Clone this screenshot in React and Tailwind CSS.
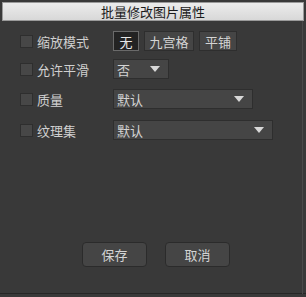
import React from "react";

const font = { fontFamily: '"Noto Sans CJK SC", "Noto Sans", sans-serif' };

function Check() {
  return <div className="w-[13px] h-[13px] bg-[#474747] border border-[#2e2e2e] shrink-0" />;
}

function Tri() {
  return (
    <svg width="10" height="6" viewBox="0 0 10 6">
      <path d="M0 0 L10 0 L5 6 Z" fill="#d8d8d8" />
    </svg>
  );
}

function Select({ w, text }) {
  return (
    <div className={`${w} h-[20px] bg-[#454545] border border-[#2e2e2e] flex items-center justify-between pl-[3px] pr-[8px] text-[#d4d4d4]`}>
      <span>{text}</span>
      <Tri />
    </div>
  );
}

function Row({ label, children, mt }) {
  return (
    <div className={`flex items-center h-[20px] ${mt}`}>
      <div className="w-[113px] pl-[20px] flex items-center gap-[4px] shrink-0">
        <Check />
        <span className="text-[#d0d0d0]">{label}</span>
      </div>
      {children}
    </div>
  );
}

export default function App() {
  return (
    <div className="w-[306px] h-[297px] bg-[#393939] flex flex-col text-[13px] leading-none relative" style={font}>
      <div className="mx-[2px] mt-[2px] h-[19px] bg-gradient-to-b from-[#ececec] to-[#d8d8d8] border border-[#9a9a9a] flex items-center justify-center text-[#1a1a1a] text-[13px]">
        批量修改图片属性
      </div>
      <Row label="缩放模式" mt="mt-[10px]">
        <div className="flex gap-[5px]">
          <div className="w-[26px] h-[20px] bg-[#232323] border border-[#6a6a6a] flex items-center justify-center text-[#e8e8e8]">无</div>
          <div className="w-[50px] h-[20px] bg-[#454545] border border-[#2e2e2e] flex items-center justify-center text-[#d4d4d4]">九宫格</div>
          <div className="w-[38px] h-[20px] bg-[#454545] border border-[#2e2e2e] flex items-center justify-center text-[#d4d4d4]">平铺</div>
        </div>
      </Row>
      <Row label="允许平滑" mt="mt-[8px]">
        <Select w="w-[56px]" text="否" />
      </Row>
      <Row label="质量" mt="mt-[10px]">
        <Select w="w-[140px]" text="默认" />
      </Row>
      <Row label="纹理集" mt="mt-[11px]">
        <Select w="w-[160px]" text="默认" />
      </Row>
      <div className="flex justify-center gap-[18px] mt-[102px] pl-[6px]">
        <div className="w-[65px] h-[25px] rounded-[4px] bg-[#454545] border border-[#2b2b2b] flex items-center justify-center text-[#d4d4d4]">保存</div>
        <div className="w-[65px] h-[25px] rounded-[4px] bg-[#454545] border border-[#2b2b2b] flex items-center justify-center text-[#d4d4d4]">取消</div>
      </div>
      <div className="absolute left-0 right-0 bottom-[3px] h-px bg-[#262626]" />
      <div className="absolute top-[21px] bottom-[3px] right-[3px] w-px bg-[#4a4a4a]" />
    </div>
  );
}
